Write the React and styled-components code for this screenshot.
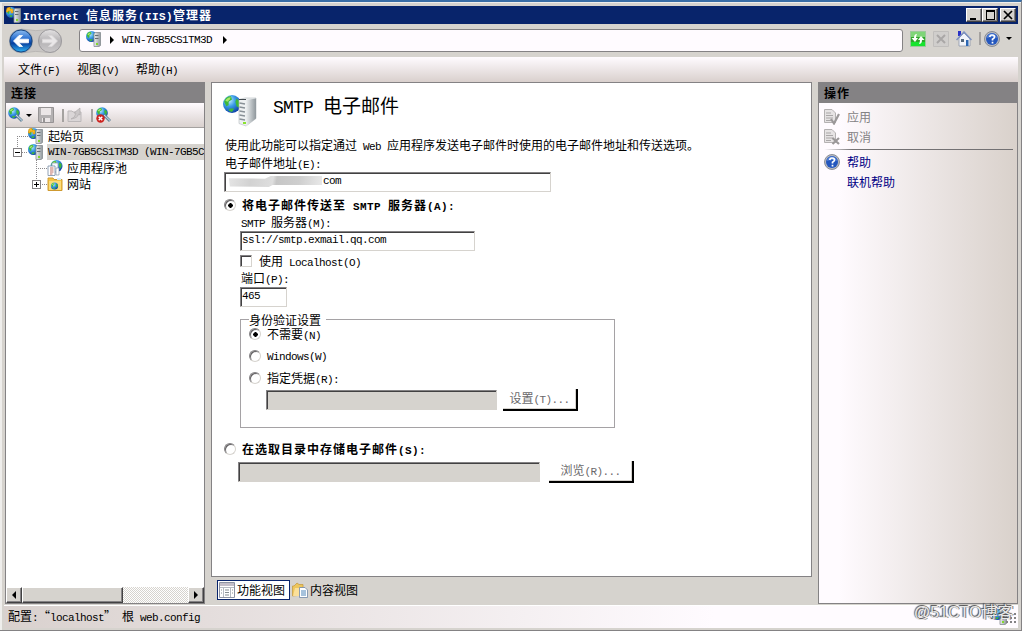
import React from 'react';
import styled, {createGlobalStyle, css} from 'styled-components';

// splits a label so latin characters take half the width of a chinese one
const Label = ({children, bold, big, color}) => {
    const parts = children.match(/[\x20-\x7e]+|[^\x20-\x7e]+/g) || [];
    return (
        <Line $bold={bold} $big={big} $color={color}>
            {parts.map((p, i) => /[\x20-\x7e]/.test(p) ? <Latin key={i} $bold={bold} $big={big}>{p}</Latin> : <span key={i}>{p}</span>)}
        </Line>
    )
}

const Gradients = () => (
    <svg width='0' height='0' style={{position: 'absolute'}}>
        <defs>
            <radialGradient id='globe' cx='35%' cy='30%' r='75%'>
                <stop offset='0' stopColor='#c4f0ff'/>
                <stop offset='.45' stopColor='#3a9be6'/>
                <stop offset='1' stopColor='#0b3da4'/>
            </radialGradient>
            <linearGradient id='metal' x1='0' x2='1'>
                <stop offset='0' stopColor='#eef1f2'/>
                <stop offset='1' stopColor='#8f979c'/>
            </linearGradient>
            <linearGradient id='blueBtn' x1='0' y1='0' x2='0' y2='1'>
                <stop offset='0' stopColor='#8dbcf0'/>
                <stop offset='.4' stopColor='#2a6fd0'/>
                <stop offset='.6' stopColor='#07409f'/>
                <stop offset='1' stopColor='#31b4f4'/>
            </linearGradient>
            <linearGradient id='grayBtn' x1='0' y1='0' x2='0' y2='1'>
                <stop offset='0' stopColor='#e4e2e3'/>
                <stop offset='.5' stopColor='#b4b2b4'/>
                <stop offset='1' stopColor='#cbc9ca'/>
            </linearGradient>
        </defs>
    </svg>
)

const Globe = ({x, y, r}) => (
    <g transform={`translate(${x} ${y}) scale(${r / 8})`}>
        <circle r='8' fill='url(#globe)'/>
        <path d='M-7-2Q-6-7-1-7L0-4L-3-2L-3 1L-5 2ZM4-5L7-2L6 3L4 2L3-2ZM-2 4L2 4L0 7L-3 6Z' fill='#3fb83a'/>
        <path d='M-6-3Q-4-6-1-6L-2-4L-4-2Z' fill='#a9e86a'/>
    </g>
)

const Server = ({star}) => (
    <svg width='16' height='16' viewBox='0 0 16 16'>
        <Globe x={5.5} y={5.5} r={5.5}/>
        {star && <path d='M1 1L4 0V2H7V6H5V4H2V5H0Z' fill='#f9bd25' stroke='#c98200' strokeWidth='.5'/>}
        <path d='M8 2.500L9.500 1.500H14.500V14.500L13 15.500H8Z' fill='url(#metal)' stroke='#858c90' strokeWidth='.8'/>
        <path d='M9 4.500H12.500M9 7.500H12.500' stroke='#666e74'/>
        <path d='M10 12H12V14H10Z' fill='#84d92d'/>
    </svg>
)

const BigServer = () => (
    <svg width='34' height='34' viewBox='0 0 34 34'>
        <Globe x={9} y={10} r={9}/>
        <path d='M16 5.500L22 4H33V24.500L23 32L16 29.500Z' fill='#eef1f2' stroke='#b3babd' strokeWidth='.6'/>
        <path d='M23 6L33 4.500V24.500L23 32Z' fill='url(#metal)'/>
        <path d='M16.500 9L22 10M16.500 13L22 14M16.500 17L22 18M16.500 21L22 22M16.500 25L22 26' stroke='#899197' strokeWidth='1.300'/>
        <path d='M16 5.500H23' stroke='#42494e'/>
        <path d='M20 28H23V30H20Z' fill='#8ae32e'/>
    </svg>
)

const NavButtons = () => (
    <svg width='60' height='28' viewBox='0 0 60 28'>
        <path d='M14 2Q29 5 43 2.500A11.500 11.500 0 0 1 43 25.500Q29 23 14 26Z' fill='#c9c6c4' stroke='#bab7b5'/>
        <circle cx='14' cy='14' r='12' fill='#999ea8'/>
        <circle cx='14' cy='14' r='11' fill='url(#blueBtn)' stroke='#174784'/>
        <path d='M6.500 14L12 8.500H15.500L12 12.200H21.500V15.800H12L15.500 19.500H12Z' fill='#fff' stroke='#fff' strokeWidth='.8'/>
        <circle cx='43' cy='14' r='11.500' fill='url(#grayBtn)' stroke='#9c9a9d'/>
        <path d='M50.500 14L45 8.500H41.500L45 12.200H35.500V15.800H45L41.500 19.500H45Z' fill='#e9e7e8' stroke='#dad8d9' strokeWidth='.8'/>
    </svg>
)

const Help = () => (
    <Glyph viewBox='0 0 16 16'>
        <circle cx='8' cy='8' r='7.500' fill='#b9bcc3' stroke='#777b85' strokeWidth='.8'/>
        <circle cx='8' cy='8' r='6' fill='#2457be'/>
        <path d='M3 7Q3 3 8 2.500Q12 3 13 7Q8 5 3 7' fill='#5583da'/>
        <path d='M5.700 6Q6 4 8 4Q10.500 4 10.500 6Q10.500 7 8.500 8.300V9.500M8.500 10.700V12.500' fill='none' stroke='#fff' strokeWidth='1.700'/>
    </Glyph>
)

const Refresh = () => (
    <Glyph viewBox='0 0 16 16'>
        <path d='M.5.5H15.500V15.500H.5Z' fill='#2fa52b' stroke='#9bc99a'/>
        <path d='M1 1H15V6H1Z' fill='#7fd578'/>
        <path d='M1 11H15V15H1Z' fill='#17e42e'/>
        <path d='M7 3Q4 3 4 7H1.500L5 11L8 7H6Q6 5 7 3M9 13Q12 13 12 9H14.500L11 5L8 9H10Q10 11 9 13' fill='#fff'/>
    </Glyph>
)

const Stop = () => (
    <Glyph viewBox='0 0 16 16'>
        <path d='M.5.5H15.500V15.500H.5Z' fill='#d0cecc' stroke='#c0bebc'/>
        <path d='M4 4L12 12M12 4L4 12' stroke='#a9a7a6' strokeWidth='2'/>
    </Glyph>
)

const Home = () => (
    <Glyph viewBox='0 0 16 16'>
        <path d='M2 0H5V5H2Z' fill='#2831c7'/>
        <path d='M3 7L8 2L14 8V15H3Z' fill='#f2f4fa' stroke='#8d98ab' strokeWidth='.8'/>
        <path d='M.500 9L8 1L15.500 9' fill='none' stroke='#7c91c1' strokeWidth='1.500'/>
        <path d='M5 8H8V11H5Z' fill='#53677d'/>
        <path d='M10 9H12.500V15H10Z' fill='#2c67b3'/>
    </Glyph>
)

const Connect = ({error}) => (
    <Glyph viewBox='0 0 16 16'>
        <Globe x={6} y={6} r={5.8}/>
        <path d='M8 8L14 14' stroke='#6f8c9e' strokeWidth='3'/>
        <path d='M8 8L14 13.500' stroke='#c4dfef'/>
        {error && <g><circle cx='4.500' cy='11.500' r='4.200' fill='#cc211d'/><path d='M2.700 9.700L6.300 13.300M6.300 9.700L2.700 13.300' stroke='#fff' strokeWidth='1.400'/></g>}
    </Glyph>
)

const Save = () => (
    <Glyph viewBox='0 0 16 16'>
        <path d='M.5.5H15.500V15.500H2L.5 14Z' fill='#b4b1b2' stroke='#969394'/>
        <path d='M3 1H13V8H3ZM4 11H12V15H4Z' fill='#ebe6e7'/>
        <path d='M5 11H7V15H5Z' fill='#969394'/>
    </Glyph>
)

const Up = () => (
    <Glyph viewBox='0 0 16 16'>
        <path d='M1 4H5L6 5H14V14.500H1Z' fill='#dad6d7' stroke='#bcb8b9'/>
        <path d='M4 12Q8 11 9 6H7L13 1V8L11.500 7Q11 11 4 12' fill='#cbc7c8' stroke='#b0acad' strokeWidth='.7'/>
    </Glyph>
)

const Pools = () => (
    <Glyph viewBox='0 0 16 16'>
        <Globe x={9.5} y={6} r={6}/>
        <path d='M5 3H11V12H5Z' fill='#f6faff' stroke='#8896ac' strokeWidth='.7'/>
        <path d='M1 6H8V15.500H1Z' fill='#fff' stroke='#778ba3' strokeWidth='.8'/>
        <path d='M3 8H6.500M3 10H6.500M3 12H6.500M3 14H5.500' stroke='#ad4c3f' strokeWidth='.8'/>
        <path d='M9 8H12V15H9Z' fill='#fff' stroke='#7286a0' strokeWidth='.6'/>
    </Glyph>
)

const Sites = () => (
    <Glyph viewBox='0 0 16 16'>
        <path d='M1 3.500V2H6L7 3.500H15V14.500H1Z' fill='#f4c443' stroke='#cf9a30'/>
        <path d='M2 5H14V14H2Z' fill='#fbdc7a'/>
        <Globe x={7.5} y={10} r={3.6}/>
        <path d='M10 2H14V4H10Z' fill='#d8eefa'/>
    </Glyph>
)

const Doc = ({cancel}) => (
    <Glyph viewBox='0 0 16 16'>
        <path d='M.500.500H8L11.500 4V13.500H.500Z' fill='#e6e3e4' stroke='#b4b1b2'/>
        <path d='M2 4H7M2 6.500H9M2 9H9M2 11.500H7' stroke='#aaa7a8'/>
        <path d={cancel ? 'M8.500 9L15 15M15 9L8.500 15' : 'M7 10L10 14.500L15 5'} fill='none' stroke='#9b9899' strokeWidth='2.200'/>
    </Glyph>
)

const Features = () => (
    <Glyph viewBox='0 0 16 16'>
        <path d='M.500.500H15.500V15.500H.500Z' fill='#fff' stroke='#8c92a2'/>
        <path d='M1 1H15V4H1Z' fill='#c4bfca'/>
        <path d='M1 5.500H15M4.500 5V15M11.500 5V15' stroke='#b5bac2'/>
        <path d='M6 8H10M6 10.500H10M6 13H10M2 8H3M2 11H3M13 8H14M13 11H14' stroke='#858d91'/>
    </Glyph>
)

const Content = () => (
    <Glyph viewBox='0 0 16 16'>
        <path d='M.5 14V4H2L5 1L7 2.500H11V13Z' fill='#edc65c' stroke='#c79d45' strokeWidth='.8'/>
        <path d='M1 14L3 6H11V14Z' fill='#fbe09a'/>
        <path d='M7.500 5.500H13L15.500 8V15.500H7.500Z' fill='#fff' stroke='#6e87a6' strokeWidth='.8'/>
        <path d='M9 9H14M9 11H14M9 13H14' stroke='#4f86ba'/>
    </Glyph>
)

const Guide = ({w, d, box, plus}) => (
    <svg width={w} height='16' shapeRendering='crispEdges'>
        <path d={d} fill='none' stroke='#8c8a8c' strokeDasharray='1 1'/>
        {box !== undefined && <g>
            <rect x={box + .5} y='4.500' width='8' height='8' fill='#fff' stroke='#848284'/>
            <path d={`M${box + 2} 8.500H${box + 7}` + (plus ? `M${box + 4.5} 6V11` : '')} stroke='#000'/>
        </g>}
    </svg>
)

const Tri = ({dir}) => {
    const d = {right: 'M0 0L4 4L0 8Z', left: 'M4 0L0 4L4 8Z', down: 'M0 0H6L3 3Z'}[dir];
    return <svg width={dir === 'down' ? 6 : 4} height={dir === 'down' ? 3 : 8}><path d={d} fill='#000'/></svg>
}

const App = () => {
    const [mode, setMode] = React.useState('server');
    const [auth, setAuth] = React.useState('none');

    return (
        <React.Fragment>
            <GlobalStyle/>
            <Gradients/>
            <Window>
                <TitleBar>
                    <Server star/>
                    <Title><Label bold color='#fff'>Internet 信息服务(IIS)管理器</Label></Title>
                    <Controls>
                        <Control><svg width='12' height='10'><path d='M2 8H8V10H2Z'/></svg></Control>
                        <Control><svg width='12' height='10' shapeRendering='crispEdges'><path d='M2 1H10V9H2Z' fill='none' stroke='#000'/><path d='M1.500 1H10.500' stroke='#000' strokeWidth='2'/></svg></Control>
                        <Control $gap><svg width='12' height='10'><path d='M2 1L10 9M10 1L2 9' stroke='#000' strokeWidth='1.700'/></svg></Control>
                    </Controls>
                </TitleBar>
                <NavBar>
                    <NavButtons/>
                    <Address>
                        <Server/>
                        <Tri dir='right'/>
                        <Label>WIN-7GB5CS1TM3D</Label>
                        <Tri dir='right'/>
                    </Address>
                    <NavTools>
                        <Refresh/>
                        <Stop/>
                        <Home/>
                        <Divider/>
                        <Help/>
                        <Tri dir='down'/>
                    </NavTools>
                </NavBar>
                <MenuBar>
                    <Label>文件(F)</Label>
                    <Label>视图(V)</Label>
                    <Label>帮助(H)</Label>
                </MenuBar>
                <Body>
                    <Side $left>
                        <SideHead><Label bold>连接</Label></SideHead>
                        <Tools>
                            <Connect/>
                            <Tri dir='down'/>
                            <Save/>
                            <Divider/>
                            <Up/>
                            <Divider/>
                            <Connect error/>
                        </Tools>
                        <Tree>
                            <Node><Guide w={22} d='M11.500 8V16M11 8.500H22'/><Server star/><NodeText><Label>起始页</Label></NodeText></Node>
                            <Node><Guide w={22} d='M11.500 0V8M16 8.500H22' box={7}/><Server/><NodeText $on><Label>WIN-7GB5CS1TM3D (WIN-7GB5CS1TM3D\Administrator)</Label></NodeText></Node>
                            <Node><Guide w={41} d='M30.500 0V16M30 8.500H41'/><Pools/><NodeText><Label>应用程序池</Label></NodeText></Node>
                            <Node><Guide w={41} d='M30.500 0V4M36 8.500H41' box={26} plus/><Sites/><NodeText><Label>网站</Label></NodeText></Node>
                        </Tree>
                        <ScrollBar>
                            <ScrollBtn><Tri dir='left'/></ScrollBtn>
                            <Thumb/>
                            <Track/>
                            <ScrollBtn><Tri dir='right'/></ScrollBtn>
                        </ScrollBar>
                    </Side>
                    <Center>
                        <Page>
                            <Heading>
                                <BigServer/>
                                <Label big>SMTP 电子邮件</Label>
                            </Heading>
                            <Row $h={18}><Label>使用此功能可以指定通过 Web 应用程序发送电子邮件时使用的电子邮件地址和传送选项。</Label></Row>
                            <Row $h={17}><Label>电子邮件地址(E):</Label></Row>
                            <Field $w={327}><Smudge/><Label>com</Label></Field>
                            <Row $h={18} $top={5}>
                                <Radio $on={mode === 'server'} onClick={() => setMode('server')}/>
                                <Label bold>将电子邮件传送至 SMTP 服务器(A):</Label>
                            </Row>
                            <Indent>
                                <Row $h={16}><Label>SMTP 服务器(M):</Label></Row>
                                <Field $w={235}><Label>ssl://smtp.exmail.qq.com</Label></Field>
                                <Row $h={16} $top={3}><Check/><Label>使用 Localhost(O)</Label></Row>
                                <Row $h={17}><Label>端口(P):</Label></Row>
                                <Field $w={47}><Label>465</Label></Field>
                                <Group>
                                    <Legend><Label>身份验证设置</Label></Legend>
                                    <Row $h={18}><Radio $on={auth === 'none'} onClick={() => setAuth('none')}/><Label>不需要(N)</Label></Row>
                                    <Row $h={18} $top={4}><Radio $on={auth === 'win'} onClick={() => setAuth('win')}/><Label>Windows(W)</Label></Row>
                                    <Row $h={18} $top={4}><Radio $on={auth === 'cred'} onClick={() => setAuth('cred')}/><Label>指定凭据(R):</Label></Row>
                                    <Row $h={22} $top={1} $left={17}>
                                        <Field $w={231} $off/>
                                        <Button $w={75} $left={6}><Label>设置(T)...</Label></Button>
                                    </Row>
                                </Group>
                            </Indent>
                            <Row $h={20} $top={12}>
                                <Radio $on={mode === 'dir'} onClick={() => setMode('dir')}/>
                                <Label bold>在选取目录中存储电子邮件(S):</Label>
                            </Row>
                            <Row $h={22} $top={1} $left={14}>
                                <Field $w={302} $off/>
                                <Button $w={85} $left={9}><Label>浏览(R)...</Label></Button>
                            </Row>
                        </Page>
                        <Views>
                            <View $on><Features/><Label>功能视图</Label></View>
                            <View><Content/><Label>内容视图</Label></View>
                        </Views>
                    </Center>
                    <Side>
                        <SideHead><Label bold>操作</Label></SideHead>
                        <Actions>
                            <Action><Doc/><Label color='#848284'>应用</Label></Action>
                            <Action><Doc cancel/><Label color='#848284'>取消</Label></Action>
                            <Rule/>
                            <Action><Help/><Label color='#000084'>帮助</Label></Action>
                            <Action $indent><Label color='#000084'>联机帮助</Label></Action>
                        </Actions>
                    </Side>
                </Body>
                <Status>
                    <Label>配置:“localhost” 根 web.config</Label>
                    <StatusEnd>
                        <Server/>
                        <svg width='12' height='12' shapeRendering='crispEdges'><path d='M8 0H10V2H8ZM4 4H6V6H4ZM8 4H10V6H8ZM0 8H2V10H0ZM4 8H6V10H4ZM8 8H10V10H8Z' fill='#848284'/></svg>
                    </StatusEnd>
                </Status>
            </Window>
            <Watermark>@51CTO博客</Watermark>
        </React.Fragment>
    )
}

const GlobalStyle = createGlobalStyle`
    * { box-sizing:border-box; }
    body {
        margin:0;
        overflow:hidden;
        background:#d6d3ce;
        font-family:'Noto Sans CJK SC', sans-serif;
    }
    svg { display:block; flex:none; }
`;

const Glyph = styled.svg`
    width:16px;
    height:16px;
`;

const Line = styled.span`
    display:inline-flex;
    align-items:baseline;
    flex:none;
    white-space:pre;
    line-height:1;
    font-size:${p => p.$big ? 19 : 12}px;
    font-weight:${p => p.$bold ? 700 : 400};
    letter-spacing:${p => p.$bold ? 1 : 0}px;
    color:${p => p.$color || '#000'};
`;

const Latin = styled.span`
    font-family:'Liberation Mono', monospace;
    font-size:${p => p.$big ? 18 : 11}px;
    letter-spacing:${p => p.$big ? -.8 : p.$bold ? .4 : -.6}px;
`;

const Window = styled.div`
    display:flex;
    flex-direction:column;
    width:1022px;
    height:631px;
    padding:2px 3px 2px 4px;
    border-top:2px solid #396da5;
    border-right:1px solid #848284;
    border-bottom:1px solid #848284;
    box-shadow:inset 2px 1px #efeeec;
    > div { flex:none; }
`;

const TitleBar = styled.div`
    display:flex;
    align-items:center;
    height:18px;
    margin-top:2px;
    padding:0 2px;
    background:#08246b;
`;

const Title = styled.div`
    display:flex;
    padding:1px 0 0 1px;
`;

const Controls = styled.div`
    display:flex;
    margin-left:auto;
`;

const raised = css`
    background:#d6d3ce;
    border:1px solid;
    border-color:#fff #424142 #424142 #fff;
    box-shadow:inset -1px -1px #848284;
`;

const Control = styled.div`
    display:flex;
    align-items:center;
    justify-content:center;
    width:16px;
    height:14px;
    margin-left:${p => p.$gap ? 2 : 0}px;
    ${raised}
`;

const NavBar = styled.div`
    display:flex;
    align-items:center;
    height:33px;
    padding-left:3px;
`;

const Address = styled.div`
    display:flex;
    align-items:center;
    gap:8px;
    width:824px;
    height:23px;
    margin-left:12px;
    margin-bottom:1px;
    padding-left:6px;
    background:#fffbff;
    border:1px solid #848284;
    border-radius:3px;
    > svg:first-child { margin-top:-2px; }
    > span { margin-top:1px; }
    > svg:last-child { margin-left:3px; }
`;

const NavTools = styled.div`
    display:flex;
    align-items:center;
    gap:7px;
    margin:0 0 4px 7px;
    > svg:last-child { margin-left:-1px; }
    > div + svg { margin-left:-4px; }
`;

const Divider = styled.div`
    width:2px;
    height:13px;
    background:#a5a2a0;
`;

const MenuBar = styled.div`
    display:flex;
    align-items:center;
    gap:17px;
    height:25px;
    padding-left:14px;
    background:linear-gradient(#fffbff, #d9d0cd);
`;

const Body = styled.div`
    display:flex;
    height:522px;
    padding-left:1px;
    > div { flex:none; }
`;

const Side = styled.div`
    display:flex;
    flex-direction:column;
    width:200px;
    border:1px solid #848284;
    background:${p => p.$left ? '#fff' : 'linear-gradient(90deg, #fffbff 10%, #d9d1cb)'};
`;

const SideHead = styled.div`
    display:flex;
    align-items:center;
    height:20px;
    padding-left:5px;
    background:#848284;
`;

const Tools = styled.div`
    display:flex;
    align-items:center;
    height:25px;
    padding-left:2px;
    background:linear-gradient(#fffbff, #d9d1ce);
    border-bottom:1px solid #a5a2a0;
    > svg { margin-right:6px; }
    > svg:first-child { margin-right:2px; }
    > div { margin-right:3px; margin-left:2px; }
`;

const Tree = styled.div`
    flex:1;
    overflow:hidden;
`;

const Node = styled.div`
    display:flex;
    align-items:center;
    height:16px;
`;

const NodeText = styled.div`
    display:flex;
    align-items:center;
    flex:1;
    min-width:0;
    height:16px;
    margin-left:3px;
    padding-left:1px;
    overflow:hidden;
    background:${p => p.$on ? '#d6d3ce' : 'none'};
`;

const ScrollBar = styled.div`
    display:flex;
    height:16px;
`;

const ScrollBtn = styled.div`
    display:flex;
    align-items:center;
    justify-content:center;
    width:16px;
    ${raised}
`;

const Thumb = styled.div`
    width:101px;
    ${raised}
`;

const Track = styled.div`
    flex:1;
    background:repeating-conic-gradient(#fff 0 25%, #d6d3ce 0 50%) 0 0 / 2px 2px;
`;

const Center = styled.div`
    display:flex;
    flex-direction:column;
    width:601px;
    margin:0 6px;
`;

const Page = styled.div`
    height:495px;
    padding:11px 0 0 12px;
    background:#fff;
    border:1px solid #848284;
`;

const Heading = styled.div`
    display:flex;
    align-items:flex-start;
    gap:16px;
    height:43px;
    margin-left:-1px;
    > span { margin-top:1px; }
`;

const Row = styled.div`
    display:flex;
    align-items:center;
    height:${p => p.$h}px;
    margin-top:${p => p.$top || 0}px;
    margin-left:${p => p.$left || 0}px;
    padding-left:${p => p.$left ? 0 : 1}px;
`;

const Field = styled.div`
    display:flex;
    align-items:center;
    width:${p => p.$w}px;
    height:20px;
    padding:0 0 1px 1px;
    background:${p => p.$off ? '#d6d3ce' : '#fff'};
    border:1px solid;
    border-color:#848284 #d6d3ce #d6d3ce #848284;
    box-shadow:inset 1px 1px #424142;
`;

const Smudge = styled.div`
    width:95px;
    height:11px;
    margin:0 1px;
    background:linear-gradient(100deg, #e6e6e6, #d2d2d2 25%, #dedede 48%, #c6c6c6 52%, #cecece 75%, #e9e9e9);
    clip-path:polygon(2% 20%, 40% 25%, 46% 0, 100% 0, 100% 82%, 48% 82%, 44% 100%, 3% 96%);
`;

const Radio = styled.button`
    flex:none;
    width:12px;
    height:12px;
    margin:-3px 6px 0 -1px;
    padding:0;
    border:1px solid;
    border-color:#848284 #d6d3ce #d6d3ce #848284;
    border-radius:50%;
    box-shadow:inset 1px 1px #636163;
    background:${p => p.$on ? 'radial-gradient(circle at 5.5px 5.5px, #000 2px, #fff 2.5px)' : '#fff'};
`;

const Check = styled.div`
    width:12px;
    height:12px;
    margin:-2px 7px 0 -1px;
    border:1px solid;
    border-color:#848284 #d6d3ce #d6d3ce #848284;
    box-shadow:inset 1px 1px #424142;
`;

const Indent = styled.div`
    margin-left:16px;
`;

const Group = styled.div`
    width:375px;
    height:109px;
    margin-top:12px;
    padding-left:8px;
    border:1px solid #a5a2a5;
`;

const Legend = styled.div`
    display:flex;
    align-items:center;
    width:77px;
    height:13px;
    margin-top:-7px;
    background:#fff;
`;

const Button = styled.div`
    display:flex;
    align-items:center;
    justify-content:center;
    width:${p => p.$w}px;
    height:22px;
    margin-left:${p => p.$left}px;
    background:#fff;
    border-right:2px solid #000;
    border-bottom:2px solid #000;
    box-shadow:inset -1px -1px #d6d3ce;
    > span { color:#6b696b; }
`;

const Views = styled.div`
    display:flex;
    align-items:center;
    height:26px;
    padding-left:6px;
`;

const View = styled.div`
    display:flex;
    align-items:center;
    gap:2px;
    height:20px;
    padding:0 ${p => p.$on ? 4 : 1}px 0 1px;
    background:${p => p.$on ? '#fff' : 'none'};
    border:1px solid ${p => p.$on ? '#08246b' : 'transparent'};
`;

const Actions = styled.div`
    padding:4px 4px 0 5px;
`;

const Action = styled.div`
    display:flex;
    align-items:center;
    gap:7px;
    height:20px;
    padding-left:${p => p.$indent ? 23 : 0}px;
`;

const Rule = styled.div`
    height:1px;
    margin:2px 0;
    background:linear-gradient(90deg, transparent, #737173 15%);
`;

const Status = styled.div`
    display:flex;
    align-items:center;
    height:23px;
    margin-top:1px;
    padding-left:4px;
    border-top:1px solid #fff;
    background:linear-gradient(90deg, #d9d1ce, #fffbff 70%);
`;

const StatusEnd = styled.div`
    display:flex;
    align-items:flex-end;
    margin-left:auto;
    > svg:first-child { margin-right:-2px; }
`;

const Watermark = styled.div`
    position:absolute;
    left:914px;
    top:603px;
    font-family:'Liberation Sans', 'Noto Sans CJK SC', sans-serif;
    font-size:16px;
    line-height:20px;
    white-space:nowrap;
    color:#e8e8e8;
    text-shadow:-1px -1px 1px #444, 1px 0 0 #777;
`;

export default App;
